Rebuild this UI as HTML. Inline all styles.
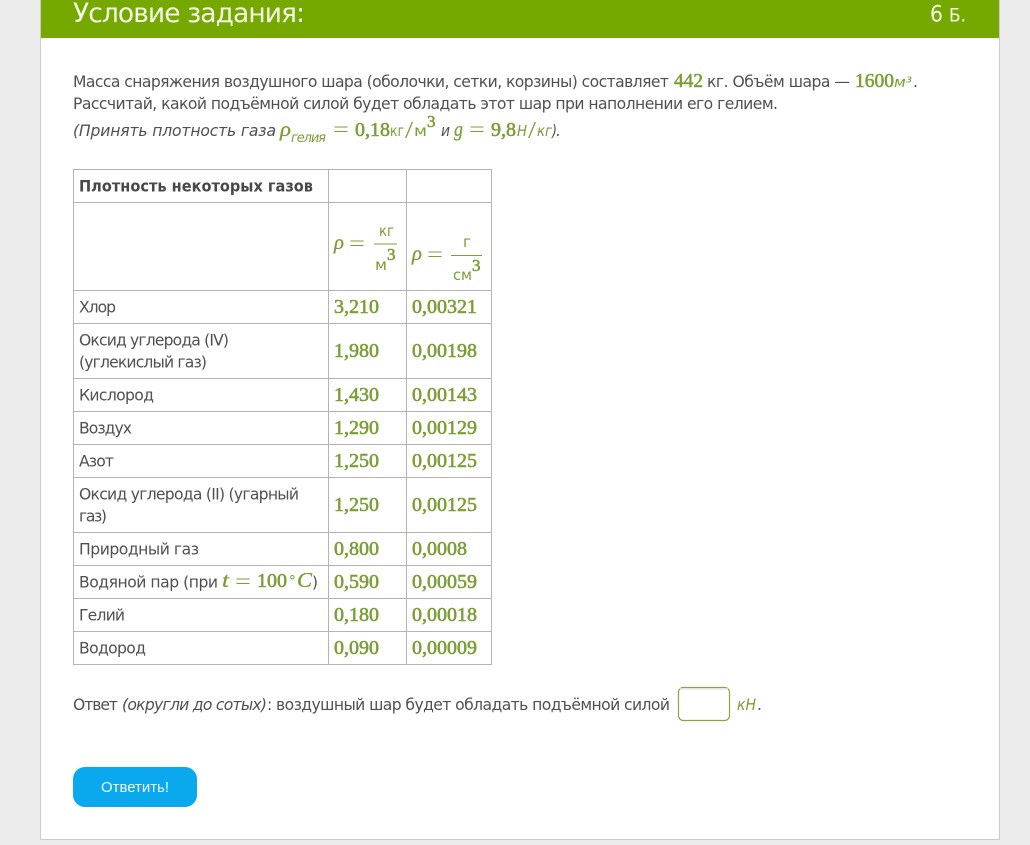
<!DOCTYPE html>
<html lang="ru"><head><meta charset="utf-8"><title>Условие задания</title>
<style>
html,body{margin:0;padding:0;width:1030px;height:845px;overflow:hidden;background:#ebebeb}
svg{display:block}
text{font-family:"DejaVu Sans","Liberation Sans",sans-serif;font-size:15.6px;fill:#505050;white-space:pre}
.i{font-style:italic}
.m,.n{font-family:"Liberation Serif",serif;font-size:20px;fill:#7a9f35;stroke:#7a9f35;stroke-width:.6px}
.mi{font-family:"Liberation Serif",serif;font-size:21px;fill:#7a9f35;font-style:italic;stroke:#7a9f35;stroke-width:.3px}
.mr{font-family:"Liberation Serif",serif;font-size:21px;fill:#7a9f35}
.g{fill:#7a9f35}
.gi{fill:#7a9f35;font-style:italic}
.l{stroke:#b4b4b4;stroke-width:1;fill:none}
</style></head><body>
<svg width="1030" height="845" viewBox="0 0 1030 845" xmlns="http://www.w3.org/2000/svg">
<rect x="40.5" y="-2" width="959" height="841.5" fill="#fff" stroke="#cbcbcb"/>
<rect x="41" y="0" width="958" height="38" fill="#76a900"/>
<text x="73" y="22" style="font-size:26.5px;fill:#f4f9e8" textLength="232">Условие задания:</text>
<text x="930" y="21.500" style="font-size:22px;fill:#f4f9e8" textLength="13" lengthAdjust="spacingAndGlyphs">6</text>
<text x="949" y="21.500" style="font-size:19px;fill:#f4f9e8" textLength="17" lengthAdjust="spacingAndGlyphs">Б.</text>

<text x="73" y="87" textLength="596">Масса снаряжения воздушного шара (оболочки, сетки, корзины) составляет</text>
<text x="674" y="87" class="m" textLength="29" lengthAdjust="spacingAndGlyphs">442</text>
<text x="707" y="87" textLength="143">кг. Объём шара —</text>
<text x="855" y="87" class="m" textLength="39" lengthAdjust="spacingAndGlyphs">1600</text>
<text x="894" y="87" class="gi" style="font-size:14px" textLength="18" lengthAdjust="spacingAndGlyphs">м³</text>
<text x="913" y="87">.</text>
<text x="73" y="109" textLength="705">Рассчитай, какой подъёмной силой будет обладать этот шар при наполнении его гелием.</text>

<text x="73" y="136" class="i" textLength="203">(Принять плотность газа</text>
<text x="280" y="136" class="mi" textLength="11" lengthAdjust="spacingAndGlyphs">ρ</text>
<text x="291" y="142" class="gi" style="font-size:13px" textLength="35">гелия</text>
<text x="333" y="136" class="mr" textLength="16" lengthAdjust="spacingAndGlyphs">=</text>
<text x="355" y="136" class="m" textLength="35" lengthAdjust="spacingAndGlyphs">0,18</text>
<text x="390" y="136" class="g" style="font-size:15px" textLength="14" lengthAdjust="spacingAndGlyphs">кг</text>
<text x="405" y="138" class="mr" style="font-size:24px" textLength="8" lengthAdjust="spacingAndGlyphs">/</text>
<text x="414" y="136" class="g" style="font-size:15px" textLength="13" lengthAdjust="spacingAndGlyphs">м</text>
<text x="427" y="127" class="m" style="font-size:17px">3</text>
<text x="441" y="136" class="i" textLength="9" lengthAdjust="spacingAndGlyphs">и</text>
<text x="454" y="136" class="mi" textLength="9" lengthAdjust="spacingAndGlyphs">g</text>
<text x="469" y="136" class="mr" textLength="16" lengthAdjust="spacingAndGlyphs">=</text>
<text x="491" y="136" class="m" textLength="25" lengthAdjust="spacingAndGlyphs">9,8</text>
<text x="517" y="136" class="gi" style="font-size:15.500px" textLength="10" lengthAdjust="spacingAndGlyphs">Н</text>
<text x="528" y="138" class="mr" style="font-size:24px" textLength="8" lengthAdjust="spacingAndGlyphs">/</text>
<text x="537" y="136" class="gi" style="font-size:15.500px" textLength="15" lengthAdjust="spacingAndGlyphs">кг</text>
<text x="552" y="136" class="i" textLength="5" lengthAdjust="spacingAndGlyphs">)</text>
<text x="556" y="136" class="i">.</text>

<path class="l" d="M73.5 169V665M328.5 169V665M406.5 169V665M491.5 169V665M73 169.5H492M73 202.5H492M73 290.5H492M73 323.5H492M73 378.5H492M73 411.5H492M73 444.5H492M73 477.5H492M73 532.5H492M73 565.5H492M73 598.5H492M73 631.5H492M73 664.5H492"/>

<text x="79" y="191.500" style="font-weight:bold;font-size:16px;fill:#484848" textLength="234" lengthAdjust="spacingAndGlyphs">Плотность некоторых газов</text>

<text x="334" y="249" class="mi" textLength="10" lengthAdjust="spacingAndGlyphs">ρ</text>
<text x="349" y="250" class="mr" textLength="16" lengthAdjust="spacingAndGlyphs">=</text>
<rect x="374" y="243.500" width="23" height="1" fill="#7a9f35"/>
<text x="379" y="236" class="g" style="font-size:15px" textLength="15" lengthAdjust="spacingAndGlyphs">кг</text>
<text x="375" y="270" class="g" style="font-size:15px" textLength="12" lengthAdjust="spacingAndGlyphs">м</text>
<text x="387" y="260" class="m" style="font-size:17px">3</text>

<text x="412" y="260" class="mi" textLength="10" lengthAdjust="spacingAndGlyphs">ρ</text>
<text x="427" y="261" class="mr" textLength="16" lengthAdjust="spacingAndGlyphs">=</text>
<rect x="451" y="255" width="31" height="1" fill="#7a9f35"/>
<text x="463" y="247" class="g" style="font-size:15px" textLength="8" lengthAdjust="spacingAndGlyphs">г</text>
<text x="453" y="280" class="g" style="font-size:15px" textLength="19" lengthAdjust="spacingAndGlyphs">см</text>
<text x="472" y="271" class="m" style="font-size:17px">3</text>

<text x="79" y="312.500" textLength="37">Хлор</text>
<text x="79" y="345.500" textLength="150">Оксид углерода (IV)</text>
<text x="79" y="367.500" textLength="128">(углекислый газ)</text>
<text x="79" y="400.500" textLength="75">Кислород</text>
<text x="79" y="433.500" textLength="53">Воздух</text>
<text x="79" y="466.500" textLength="35">Азот</text>
<text x="79" y="499.500" textLength="220">Оксид углерода (II) (угарный</text>
<text x="79" y="521.500" textLength="28">газ)</text>
<text x="79" y="554.500" textLength="120">Природный газ</text>
<text x="79" y="587.500" textLength="139">Водяной пар (при</text>
<text x="222" y="587" class="mi" textLength="7" lengthAdjust="spacingAndGlyphs">t</text>
<text x="235" y="588" class="mr" textLength="16" lengthAdjust="spacingAndGlyphs">=</text>
<text x="257" y="587" class="n" textLength="30" lengthAdjust="spacingAndGlyphs">100</text>
<text x="288" y="581" class="mr" style="font-size:14px">∘</text>
<text x="297" y="587" class="mi" textLength="15" lengthAdjust="spacingAndGlyphs">C</text>
<text x="312" y="587.500" textLength="6" lengthAdjust="spacingAndGlyphs">)</text>
<text x="79" y="620.500" textLength="46">Гелий</text>
<text x="79" y="653.500" textLength="67">Водород</text>

<text x="334" y="313" class="n" textLength="45" lengthAdjust="spacingAndGlyphs">3,210</text><text x="412" y="313" class="n" textLength="65" lengthAdjust="spacingAndGlyphs">0,00321</text>
<text x="334" y="357" class="n" textLength="45" lengthAdjust="spacingAndGlyphs">1,980</text><text x="412" y="357" class="n" textLength="65" lengthAdjust="spacingAndGlyphs">0,00198</text>
<text x="334" y="401" class="n" textLength="45" lengthAdjust="spacingAndGlyphs">1,430</text><text x="412" y="401" class="n" textLength="65" lengthAdjust="spacingAndGlyphs">0,00143</text>
<text x="334" y="434" class="n" textLength="45" lengthAdjust="spacingAndGlyphs">1,290</text><text x="412" y="434" class="n" textLength="65" lengthAdjust="spacingAndGlyphs">0,00129</text>
<text x="334" y="467" class="n" textLength="45" lengthAdjust="spacingAndGlyphs">1,250</text><text x="412" y="467" class="n" textLength="65" lengthAdjust="spacingAndGlyphs">0,00125</text>
<text x="334" y="511" class="n" textLength="45" lengthAdjust="spacingAndGlyphs">1,250</text><text x="412" y="511" class="n" textLength="65" lengthAdjust="spacingAndGlyphs">0,00125</text>
<text x="334" y="555" class="n" textLength="45" lengthAdjust="spacingAndGlyphs">0,800</text><text x="412" y="555" class="n" textLength="55" lengthAdjust="spacingAndGlyphs">0,0008</text>
<text x="334" y="588" class="n" textLength="45" lengthAdjust="spacingAndGlyphs">0,590</text><text x="412" y="588" class="n" textLength="65" lengthAdjust="spacingAndGlyphs">0,00059</text>
<text x="334" y="621" class="n" textLength="45" lengthAdjust="spacingAndGlyphs">0,180</text><text x="412" y="621" class="n" textLength="65" lengthAdjust="spacingAndGlyphs">0,00018</text>
<text x="334" y="654" class="n" textLength="45" lengthAdjust="spacingAndGlyphs">0,090</text><text x="412" y="654" class="n" textLength="65" lengthAdjust="spacingAndGlyphs">0,00009</text>

<text x="73" y="710" textLength="45">Ответ</text>
<text x="122" y="710" class="i" textLength="145">(округли до сотых)</text>
<text x="267" y="710" textLength="403">: воздушный шар будет обладать подъёмной силой</text>
<rect x="678.500" y="687.500" width="51" height="33" rx="5" fill="#fff" stroke="#86a843" stroke-width="1.2"/>
<path d="M680 689H728" stroke="#e6e9e2" stroke-width="1.500" fill="none"/>
<text x="737" y="710" class="gi" textLength="19" lengthAdjust="spacingAndGlyphs">кН</text>
<text x="757" y="710">.</text>

<rect x="73" y="767" width="124" height="40" rx="12" fill="#0aa9ee"/>
<text x="101" y="792" style="font-family:'Liberation Sans',sans-serif;font-size:15px;fill:#f2fbff" textLength="68" lengthAdjust="spacingAndGlyphs">Ответить!</text>
</svg>
</body></html>
